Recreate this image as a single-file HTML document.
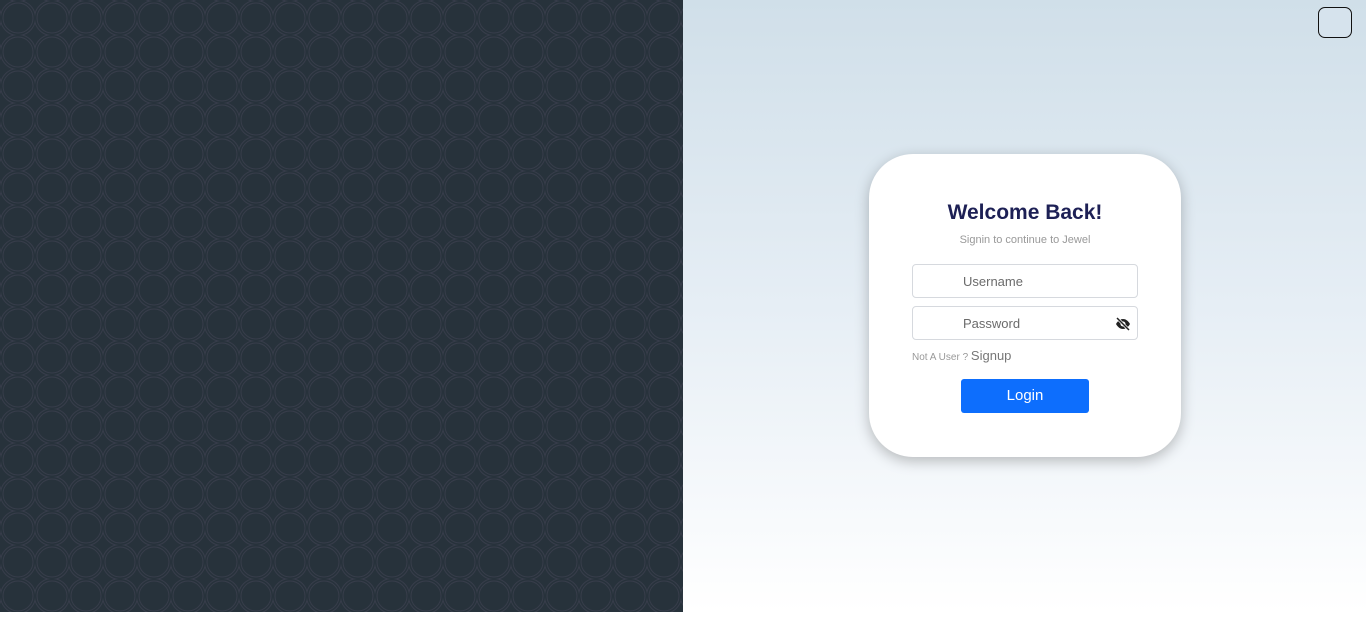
<!DOCTYPE html>
<html><head><style>
html,body{margin:0;width:1366px;height:612px;overflow:hidden;font-family:"Liberation Sans",sans-serif}
.left{position:absolute;left:0;top:0;width:683px;height:612px;background:#27323b}
.right{position:absolute;left:683px;top:0;width:683px;height:612px;background:linear-gradient(#d0dfe9,#e6eef5 50%,#ffffff)}
.tbtn{position:absolute;left:1318px;top:7px;width:34px;height:31px;border:1.5px solid #111;border-radius:7px;box-sizing:border-box;background:#d6e3ed}
.card{position:absolute;left:869px;top:154px;width:312px;height:303px;background:#fff;border-radius:44px;box-shadow:0 4px 14px rgba(0,0,0,.25)}
h1{position:absolute;left:0;width:312px;top:47px;margin:0;text-align:center;font-size:21px;color:#1d2055;font-weight:bold}
.sub{position:absolute;left:0;width:312px;top:80px;text-align:center;font-size:11px;color:#999}
.inp{position:absolute;left:43px;width:226px;height:34px;border:1px solid #d6d9de;border-radius:4px;font-size:13px;color:#6b6b6b;line-height:34px;box-sizing:border-box;padding-left:50px}
.na{position:absolute;left:43px;top:194px;font-size:10px;color:#999}
.na span{font-size:13px;color:#777}
.btn{position:absolute;left:92px;top:225px;width:128px;height:34px;background:#0d6efd;border-radius:3px;color:#fff;text-align:center;line-height:34px;font-size:15px}
</style></head><body>
<div class="left"><svg width="683" height="612"><defs><pattern id="p" width="34" height="34" patternUnits="userSpaceOnUse" x="1" y="1"><g fill="none" stroke="#383d4b" stroke-width="0.9"><circle cx="17" cy="17" r="17.5"/><circle cx="17" cy="17" r="15"/></g></pattern></defs><rect width="683" height="612" fill="url(#p)"/></svg></div>
<div class="right"></div>
<div class="tbtn"></div>
<div class="card">
<h1>Welcome Back!</h1>
<div class="sub">Signin to continue to Jewel</div>
<div class="inp" style="top:110px">Username</div>
<div class="inp" style="top:152px">Password<svg style="position:absolute;right:6px;top:9px" width="16" height="16" viewBox="0 0 16 16"><path d="M1 8c2-3.5 4.5-5 7-5s5 1.5 7 5c-2 3.5-4.5 5-7 5S3 11.5 1 8z" fill="#222"/><circle cx="8" cy="8" r="2.5" fill="#fff"/><path d="M2 2l12 12" stroke="#fff" stroke-width="3"/><path d="M2 2l12 12" stroke="#222" stroke-width="1.5"/></svg></div>
<div class="na">Not A User ? <span>Signup</span></div>
<div class="btn">Login</div>
</div>
</body></html>
